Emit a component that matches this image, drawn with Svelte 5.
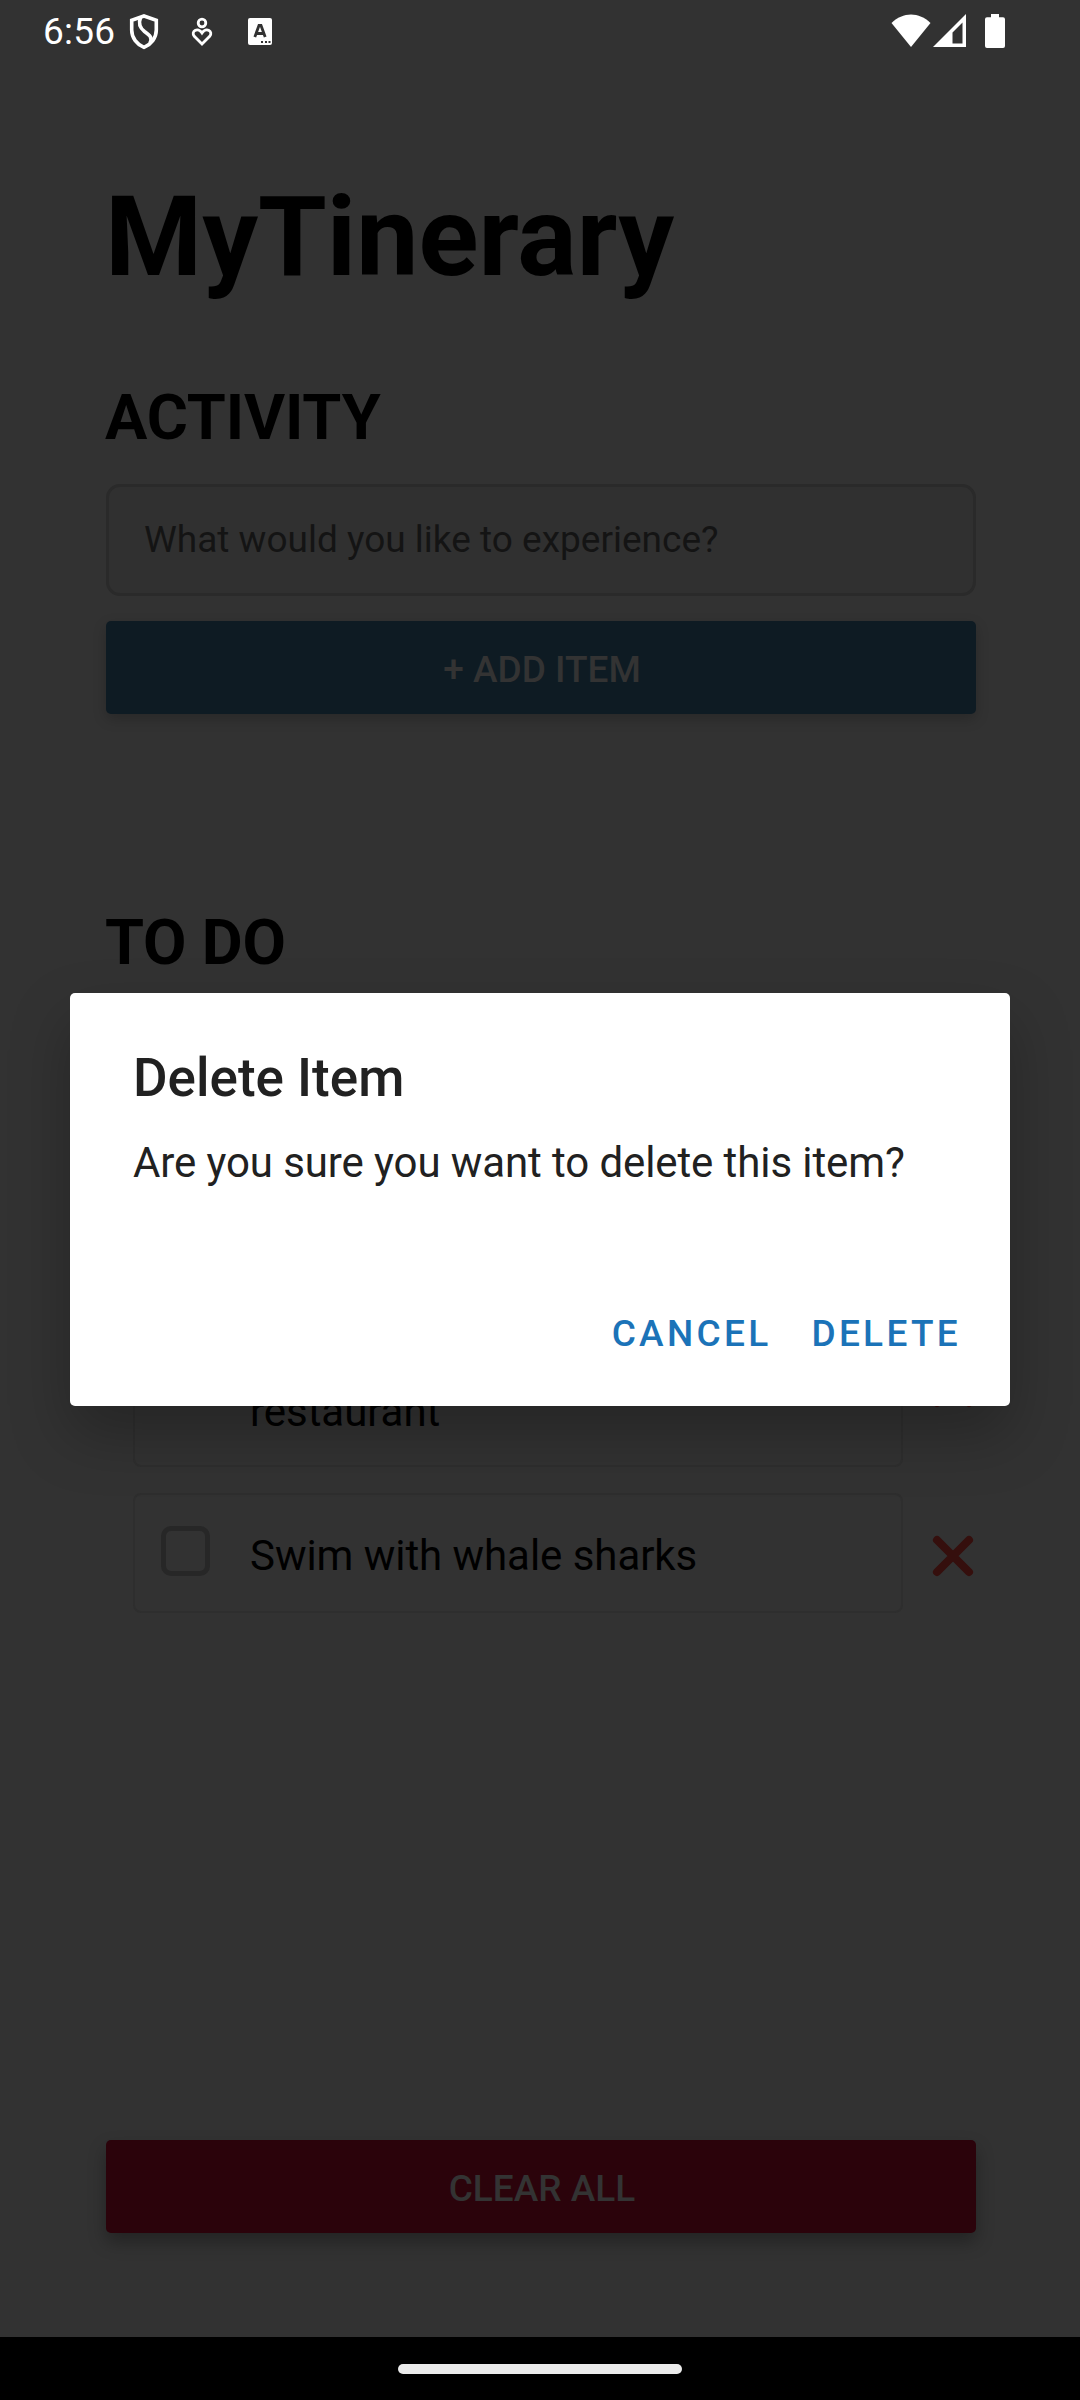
<script>
  const title = 'MyTinerary';
  const items = [
    { lines: ['', 'restaurant'], done: false },
    { lines: ['Swim with whale sharks'], done: false },
  ];
</script>

<div class="device">
  <div class="screen">
    <header class="status">
      <span class="time">6:56</span>
      <svg class="shield" viewBox="0 0 30 36" width="30" height="36">
        <path d="M15 2 L27.3 6.3 V16 C27.3 24 22 30.5 15 33.4 C8 30.5 2.7 24 2.7 16 V6.3 Z" />
        <path d="M11.5 3.5 C9 10 11 14 15.5 17.5 C21 21.5 23.5 23.5 21 29" />
      </svg>
      <svg class="wellbeing" viewBox="0 0 22 30" width="22" height="30">
        <circle cx="11" cy="6" r="3.8" />
        <path d="M11 27 L3.3 19.3 C-.6 14.5 6.5 9.8 11 16 C15.500 9.800 22.600 14.500 18.700 19.300 Z" />
      </svg>
      <svg class="keyboard" viewBox="0 0 24 27" width="24" height="27">
        <rect width="24" height="27" rx="2" fill="#fff" />
        <path d="M6.800 19 L11 7.500 H13 L17.200 19 M8.500 15.500 H15.500" fill="none" stroke="#323232" stroke-width="2.800" />
        <path d="M13 24 h2 M17 24 h2 M20.500 24 h2" stroke="#323232" stroke-width="2" />
      </svg>
      <span class="grow"></span>
      <svg class="wifi" viewBox="0 0 40 33" width="40" height="33">
        <path d="M.5 9 C12-2.500 28-2.500 39.500 9 L20 33 Z" fill="#fff" />
      </svg>
      <svg class="signal" viewBox="0 0 33 33" width="33" height="33">
        <path d="M33 0 V33 H0 Z M29.500 8.500 L19.500 18.500 V29.500 H29.500 Z" fill="#fff" fill-rule="evenodd" />
      </svg>
      <svg class="battery" viewBox="0 0 20 34" width="20" height="34">
        <path d="M6 0 H14 V3.300 H18 Q20 3.300 20 5.300 V32 Q20 34 18 34 H2 Q0 34 0 32 V5.300 Q0 3.300 2 3.300 H6 Z" fill="#fff" />
      </svg>
    </header>

    <main>
      <h1>{title}</h1>
      <h2 class="activity">ACTIVITY</h2>
      <div class="field">What would you like to experience?</div>
      <button class="action add">+ ADD ITEM</button>

      <h2 class="todo">TO DO</h2>
      <ul>
        {#each items as item}
          <li>
            <div class="card">
              <span class="check"></span>
              <div class="label">
                {#each item.lines as line}
                  <span>{line}</span>
                {/each}
              </div>
            </div>
            <svg class="remove" viewBox="0 0 42 42" width="42" height="42">
              <path d="M5 5 L37 37 M37 5 L5 37" />
            </svg>
          </li>
        {/each}
      </ul>

      <button class="action clear">CLEAR ALL</button>
    </main>
  </div>

  <footer class="nav"><span class="handle"></span></footer>

  <div class="dialog" role="dialog" aria-label="Delete Item">
    <h3>Delete Item</h3>
    <p>Are you sure you want to delete this item?</p>
    <div class="choices">
      <button>CANCEL</button>
      <button>DELETE</button>
    </div>
  </div>
</div>

<style>
  :global(body) {
    margin: 0;
    background: #000;
  }
  .device {
    position: relative;
    width: 1080px;
    height: 2400px;
    overflow: hidden;
    font-family: Roboto, 'Liberation Sans', sans-serif;
    color: #000;
  }
  .device * {
    box-sizing: border-box;
  }
  .screen {
    height: 2337px;
    background: #323232;
  }
  .status {
    display: flex;
    align-items: flex-start;
    height: 62px;
    padding: 14px 75px 0 43px;
    color: #fff;
  }
  .time {
    width: 86px;
    margin-top: -4px;
    font-size: 37px;
    letter-spacing: 0.2px;
    line-height: 43px;
  }
  .grow {
    flex: 1;
  }
  .shield,
  .wellbeing {
    fill: none;
    stroke: #fff;
  }
  .shield {
    stroke-width: 3.6;
  }
  .wellbeing {
    margin: 3px 0 0 32px;
    stroke-width: 2.8;
  }
  .keyboard {
    margin: 4px 0 0 35px;
  }
  .signal {
    margin-left: 2px;
  }
  .battery {
    margin-left: 19px;
  }
  main {
    display: flex;
    flex-direction: column;
    padding: 110px 104px 0 106px;
  }
  h1,
  h2,
  h3,
  p,
  ul {
    margin: 0;
    padding: 0;
  }
  h1 {
    margin-left: -1px;
    height: 130px;
    font-size: 111px;
    line-height: 130px;
    font-weight: 700;
  }
  h2 {
    margin-left: -1px;
    font-size: 63px;
    line-height: 74px;
    font-weight: 700;
    letter-spacing: -0.15px;
  }
  .activity {
    margin-top: 79px;
  }
  .field {
    height: 112px;
    margin-top: 29px;
    padding-left: 35px;
    border: 3px solid #2a2a2a;
    border-radius: 14px;
    background: #303030;
    color: #141414;
    font-size: 37px;
    line-height: 105px;
  }
  button {
    border: 0;
    padding: 0;
    background: none;
    font-family: inherit;
    font-size: 37px;
    font-weight: 500;
  }
  .action {
    height: 93px;
    padding: 4px 0 0 2px;
    border-radius: 5px;
    color: #333;
  }
  .add {
    margin-top: 25px;
    background: #0e1b23;
    box-shadow: 0 5px 14px rgba(0, 0, 0, 0.2);
  }
  .todo {
    margin-top: 192px;
  }
  ul {
    display: flex;
    flex-direction: column;
    justify-content: flex-end;
    gap: 26px;
    height: 633px;
    margin-left: 27px;
    list-style: none;
  }
  li {
    display: flex;
    align-items: center;
  }
  .card {
    display: flex;
    align-items: center;
    width: 770px;
    padding: 34px 0 34px 26px;
    border: 2px solid #2e2e2e;
    border-radius: 8px;
  }
  .check {
    width: 49px;
    height: 50px;
    margin-top: -4px;
    border: 5px solid #272727;
    border-radius: 10px;
  }
  .label {
    display: flex;
    flex-direction: column;
    margin: 3px 0 -3px 40px;
    font-size: 42px;
    line-height: 48px;
    letter-spacing: -0.05px;
  }
  .label span {
    height: 48px;
  }
  .label span + span {
    margin: 2px 0 -2px;
  }
  .remove {
    margin: 5px 0 0 29px;
    fill: none;
    stroke: #350f0d;
    stroke-width: 8;
    stroke-linecap: round;
  }
  li:first-child .remove {
    margin-top: 8px;
  }
  .clear {
    margin-top: 527px;
    background: #2b030b;
    box-shadow: 0 9px 18px rgba(0, 0, 0, 0.3);
  }
  .nav {
    display: flex;
    justify-content: center;
    height: 63px;
    padding-top: 27px;
    background: #000;
  }
  .handle {
    width: 284px;
    height: 10px;
    border-radius: 5px;
    background: #ebebeb;
  }
  .dialog {
    position: absolute;
    top: 993px;
    left: 70px;
    width: 940px;
    height: 413px;
    padding: 54px 49px 0 63px;
    border-radius: 5px;
    background: #fff;
    box-shadow: 0 28px 60px rgba(0, 0, 0, 0.25);
    color: #212121;
  }
  h3 {
    font-size: 53px;
    line-height: 62px;
    font-weight: 500;
  }
  p {
    margin-top: 29px;
    font-size: 42px;
    line-height: 50px;
    letter-spacing: -0.1px;
    white-space: nowrap;
  }
  .choices {
    display: flex;
    justify-content: flex-end;
    gap: 40px;
    margin-top: 124px;
  }
  .choices button {
    color: #1b73b8;
    letter-spacing: 3.3px;
    line-height: 43px;
  }
</style>
